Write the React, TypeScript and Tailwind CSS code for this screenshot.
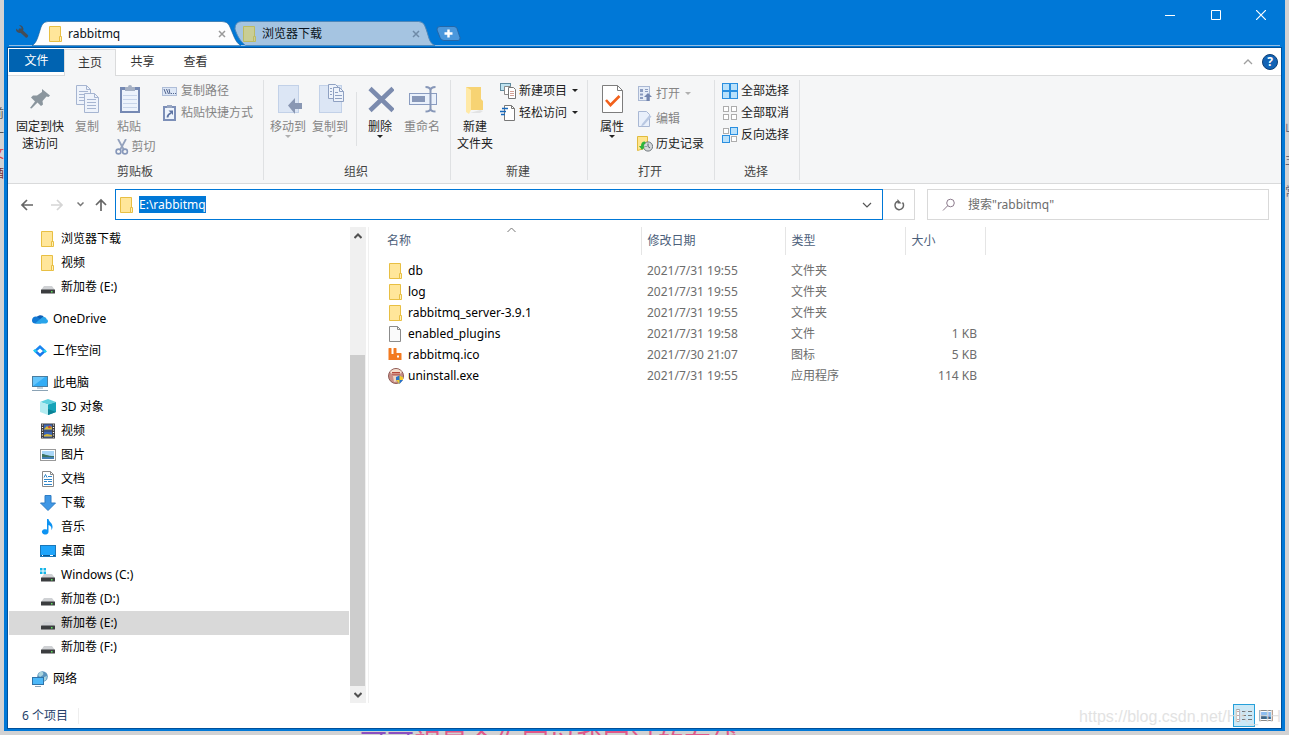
import type { ReactNode } from 'react'

const drives = ['D', 'E', 'F']

function FolderIcon({ muted = false }: { muted?: boolean }) {
  const edge = muted ? '#bdbb62' : '#e8bf43'
  return (
    <svg width="16" height="16" viewBox="0 0 16 16" className="shrink-0">
      <path d="M1.500.5h11v15h-11z" fill={muted ? '#c9cd94' : '#ffe69a'} stroke={edge} />
      <path d="M11.500 15.500v-5h2v5z" fill={muted ? '#c9cd94' : '#fff0b8'} stroke={edge} />
    </svg>
  )
}

function DriveIcon({ system = false }: { system?: boolean }) {
  return (
    <svg width="16" height="16" viewBox="0 0 16 16" className="shrink-0">
      {system && (
        <path d="M0 1h2.500v2.500H0zM3.500 1h2.500v2.500H3.500zM0 4.500h2.500V7H0zM3.500 4.500h2.500V7H3.500z" fill="#14b5e8" />
      )}
      <path d="M4 7h8l3 4H1z" fill="#cfd1d4" />
      <rect x="1" y="10.500" width="14" height="4" rx="0.500" fill="#3b3d3f" />
      <rect x="11" y="12" width="1.500" height="1.500" fill="#5fe05f" />
    </svg>
  )
}

function OneDriveIcon() {
  return (
    <svg width="16" height="16" viewBox="0 0 16 16" className="shrink-0">
      <path d="M4 7.500a4.500 4.500 0 0 1 8.300-1L9 10z" fill="#0f5fb5" />
      <path d="M0 9.500C0 7 2 5.300 4.500 5.600L11 10l-2 2.500H3C1.300 12.500 0 11.300 0 9.500z" fill="#1279d4" />
      <path d="M3 12.500l7-6c3-1.200 4.300.3 4.500 1.700 1 .4 1.500 1.200 1.500 2.100 0 1.200-1 2.200-2.200 2.200z" fill="#28a4ea" />
    </svg>
  )
}

function WorkspaceIcon() {
  return (
    <svg width="16" height="16" viewBox="0 0 16 16" className="shrink-0">
      <path d="M2.500 7L8 2l6 5.500-2 1.500-4-3.500-3 2.500z" fill="#1a86f0" />
      <path d="M13.500 9L8 14 2 8.500 4 7l4 3.500L11 8z" fill="#1677ec" />
      <path d="M1 7.500L3 6l2 2-1.500 2zM15 8.500L13 10l-2-2 1.500-2z" fill="#20cdf0" />
    </svg>
  )
}

function ComputerIcon() {
  return (
    <svg width="16" height="16" viewBox="0 0 16 16" className="shrink-0">
      <rect x="0.500" y="1.500" width="15" height="10" fill="#33adf5" stroke="#4a7d9f" />
      <path d="M1 11V2h12z" fill="#65c5fb" />
      <path d="M5 13h6M0 15.500h16" stroke="#8ba3b5" />
    </svg>
  )
}

function CubeIcon() {
  return (
    <svg width="16" height="16" viewBox="0 0 16 16" className="shrink-0">
      <path d="M0 3l8-3 8 3-8 2.500z" fill="#5dd1de" />
      <path d="M0 3l8 2.500V16l-8-3z" fill="#b3ecf1" />
      <path d="M16 3L8 5.500V16l8-3z" fill="#16a3b8" />
      <path d="M8 10l8 3-8 3z" fill="#0b8295" />
    </svg>
  )
}

function VideoIcon() {
  return (
    <svg width="16" height="16" viewBox="0 0 16 16" className="shrink-0">
      <rect x="1" y="0.500" width="14" height="15" fill="#3f3f42" />
      <rect x="4" y="1.500" width="8" height="6" fill="#3c67b8" />
      <rect x="4" y="8.500" width="8" height="6" fill="#3c67b8" />
      <path d="M5 5l2-2 2 2 2-2 1 2v1.500H4zM4 12l3-1 5 1v1.500H4z" fill="#d9b834" />
      <circle cx="9.500" cy="4" r="1.300" fill="#cf4a2c" />
      <path d="M2.500 1.500v13M13.500 1.500v13" stroke="#fff" strokeWidth="1.200" strokeDasharray="1 1.500" />
    </svg>
  )
}

function PictureIcon() {
  return (
    <svg width="16" height="16" viewBox="0 0 16 16" className="shrink-0">
      <rect x="0.500" y="2.500" width="15" height="11" fill="#fff" stroke="#999" />
      <rect x="2" y="4" width="12" height="8" fill="#a9d6f7" />
      <path d="M2 7c3 0 5 2 12 2v1H2z" fill="#3c7360" />
      <path d="M2 10h12v2H2z" fill="#4480b4" />
    </svg>
  )
}

function DocumentIcon() {
  return (
    <svg width="16" height="16" viewBox="0 0 16 16" className="shrink-0">
      <path d="M2.500.5h8l3 3v12h-11z" fill="#fff" stroke="#8a8a8a" />
      <path d="M10.500.5v3h3" fill="none" stroke="#8a8a8a" />
      <path d="M4 6.500l1.500-3L7 6.500M8 5.500h4M4 8.500h8M4 10.500h3M8 10.500h4M4 13.500h8" fill="none" stroke="#3186c8" />
    </svg>
  )
}

function DownloadIcon() {
  return (
    <svg width="16" height="16" viewBox="0 0 16 16" className="shrink-0">
      <path d="M5 .5h6V8h4.500L8 15.500.5 8H5z" fill="#3f97e5" stroke="#2f7dc4" />
    </svg>
  )
}

function MusicIcon() {
  return (
    <svg width="16" height="16" viewBox="0 0 16 16" className="shrink-0">
      <path d="M7 0h1.500c.3 3 4.500 4 4 8.500-.1 1-.6 2-1.300 2.700.8-3-.7-4.500-2.700-5.200V13a3.300 2.700 0 1 1-1.500-2.400z" fill="#0d93f2" />
    </svg>
  )
}

function DesktopIcon() {
  return (
    <svg width="16" height="16" viewBox="0 0 16 16" className="shrink-0">
      <rect x="0.500" y="2.500" width="15" height="11" fill="#1fa5fb" stroke="#1a77b8" />
      <path d="M1 12.500h14" stroke="#0b5893" />
      <path d="M2 12.500h1M10 12.500h3" stroke="#fff" />
    </svg>
  )
}

function NetworkIcon() {
  return (
    <svg width="16" height="16" viewBox="0 0 16 16" className="shrink-0">
      <circle cx="10.500" cy="5.500" r="5.300" fill="#5a94bd" />
      <path d="M8 1c3-1 4 1 3 3L8 6 6 4zM12 6l3-1-1 4-2 1z" fill="#a9d3dd" />
      <rect x="0.500" y="6.500" width="11" height="7" fill="#4db8f8" stroke="#2f73a8" />
      <path d="M3 15.500h6" stroke="#8ba3b5" />
    </svg>
  )
}

function FileIcon() {
  return (
    <svg width="16" height="16" viewBox="0 0 16 16" className="shrink-0">
      <path d="M1.500.5h8l3 3v12h-11z" fill="#fafafa" stroke="#8b8b8b" />
      <path d="M9.500.5v3h3" fill="none" stroke="#8b8b8b" />
    </svg>
  )
}

function RabbitIcon() {
  return (
    <svg width="16" height="16" viewBox="0 0 16 16" className="shrink-0">
      <path d="M.5 1.500A.5.500 0 0 1 1 1h2a.5.500 0 0 1 .5.500V7h2V1.500A.5.500 0 0 1 6 1h2a.5.500 0 0 1 .5.500V6H13a.5.500 0 0 1 .5.500V13H.5zM9 8.500v2h2v-2z" fill="#f37a20" fillRule="evenodd" />
    </svg>
  )
}

function InstallerIcon() {
  return (
    <svg width="16" height="16" viewBox="0 0 16 16" className="shrink-0">
      <circle cx="8" cy="8" r="7.500" fill="#c98f87" stroke="#8d5a54" />
      <path d="M2 4c3-4 9-4 12 0l-2 2H4z" fill="#f3dfcf" />
      <path d="M4 6h8M4 4.500h8" stroke="#b4473a" />
      <path d="M5 8h5v5l-4 1z" fill="#efd6c4" />
      <path d="M8 9l3.500-1.500L15 9v3l-3.500 4L8 12z" fill="#2773c9" />
      <path d="M11.500 7.500L15 9v3h-3.500zM8 12h3.500v4z" fill="#f8cc2d" />
    </svg>
  )
}

function PinIcon() {
  return (
    <svg width="24" height="32" viewBox="0 0 24 32">
      <path d="M14 5l8 6.500-1.500 1.500-2-.5-4 4.500.5 3.500-2 1.500-3.500-3.500-6 6L2 24l5-6.500-4-4L5 11.500h4L14 8z" fill="#8b969e" />
    </svg>
  )
}

function PageLines({ x, y }: { x: number; y: number }) {
  return (
    <g transform={`translate(${x} ${y})`}>
      <path d="M.5.5h10l4 4v15H.5z" fill="#eef3fb" stroke="#a6b5d1" />
      <path d="M10.500.5v4h4M3 6.500h9M3 9.500h9M3 12.500h9M3 15.500h9" fill="none" stroke="#a6b5d1" />
    </g>
  )
}

function CopyIcon() {
  return (
    <svg width="26" height="32" viewBox="0 0 26 32">
      <PageLines x={2} y={1} />
      <PageLines x={10} y={9} />
    </svg>
  )
}

function PasteIcon() {
  return (
    <svg width="24" height="32" viewBox="0 0 24 32">
      <rect x="3" y="3" width="20" height="26" fill="#7589b3" />
      <rect x="5" y="6" width="16" height="21" fill="#edf3fc" />
      <path d="M6 11.500h14M6 15.500h14M6 19.500h14M6 23.500h14" stroke="#c8d5ea" />
      <path d="M8 7V3h3a2 2 0 0 1 4 0h3v4z" fill="#a6b1c4" />
    </svg>
  )
}

function MoveIcon() {
  return (
    <svg width="28" height="32" viewBox="0 0 28 32">
      <rect x="4.500" y="1.500" width="20" height="27" fill="#dce6f5" stroke="#c2d1e8" />
      <path d="M14 21.500l7-7.500v5h8v6h-8v5z" fill="#8997b3" />
    </svg>
  )
}

function CopyToIcon() {
  return (
    <svg width="28" height="32" viewBox="0 0 28 32">
      <rect x="3.500" y="1.500" width="22" height="27" fill="#dce6f5" stroke="#c2d1e8" />
      <path d="M12.500.5h7l3 3v11h-10z" fill="#eef3fb" stroke="#8fa1c2" />
      <path d="M17.500 3.500h6l4 4v10h-10z" fill="#eef3fb" stroke="#8fa1c2" />
      <path d="M23.500 3.500v4h4M19 8.500h3M19 11.500h7M19 14.500h7M14 4.500h2M14 7.500h2M14 10.500h2" fill="none" stroke="#8fa1c2" />
    </svg>
  )
}

function DeleteIcon() {
  return (
    <svg width="28" height="32" viewBox="0 0 28 32">
      <path d="M4 4.500l23 22M27 4.500l-23 22" stroke="#7b8bae" strokeWidth="4.500" />
    </svg>
  )
}

function RenameIcon() {
  return (
    <svg width="30" height="32" viewBox="0 0 30 32">
      <rect x="2.500" y="9.500" width="27" height="11" fill="#eaf1fb" stroke="#8a9cc0" />
      <rect x="5" y="12" width="13" height="6" fill="#8797b8" />
      <path d="M18.500 3c3 0 5 1 5 3.500v18c0 2-2 3-5 3M28.500 3c-3 0-5 1-5 3.500v18c0 2 2 3 5 3" fill="none" stroke="#8797b8" strokeWidth="2" />
    </svg>
  )
}

function NewFolderIcon() {
  return (
    <svg width="24" height="32" viewBox="0 0 24 32">
      <path d="M3 3h15v12l2 2v9H6z" fill="#f7d373" />
      <path d="M3 3l5 3v20l-2 4-3-2z" fill="#ffe9a6" />
      <path d="M7 29l10-3 3 1-3 2z" fill="#e2e3e4" />
    </svg>
  )
}

function PropertiesIcon() {
  return (
    <svg width="24" height="32" viewBox="0 0 24 32">
      <path d="M2.500 1.500h15l5 5v22h-20z" fill="#fff" stroke="#7d7d7d" />
      <path d="M17.500 1.500v5h5" fill="none" stroke="#7d7d7d" />
      <path d="M6 16l4.500 5 9-9" fill="none" stroke="#f2611c" strokeWidth="2.600" />
    </svg>
  )
}

function CutIcon() {
  return (
    <svg width="14" height="16" viewBox="0 0 14 16">
      <path d="M3 0l6 11M11 0L5 11" stroke="#94a2bd" strokeWidth="1.800" />
      <circle cx="3.500" cy="12.500" r="2.400" fill="none" stroke="#8798ba" strokeWidth="1.600" />
      <circle cx="10" cy="12.500" r="2.400" fill="none" stroke="#8798ba" strokeWidth="1.600" />
    </svg>
  )
}

function CopyPathIcon() {
  return (
    <svg width="16" height="16" viewBox="0 0 16 16">
      <rect x="0.500" y="4.500" width="14" height="8" fill="#dde7f6" stroke="#aebdd8" />
      <path d="M2 6l2 5M4.500 6l2 5M7 6l1 5M9 10.500h1M11 10.500h1M13 10.500h1" stroke="#52658f" />
    </svg>
  )
}

function PasteShortcutIcon() {
  return (
    <svg width="16" height="16" viewBox="0 0 16 16">
      <rect x="2" y="2" width="11" height="13" fill="#eef4fc" stroke="#7c8fb8" strokeWidth="2" />
      <path d="M5 0h5v3H5z" fill="#97a5c1" />
      <path d="M5.500 12.500c0-2.500 1-3.500 3.500-4.500" fill="none" stroke="#5e74a3" strokeWidth="1.800" />
      <path d="M6.500 5.500H11V10z" fill="#5e74a3" />
    </svg>
  )
}

function NewItemIcon() {
  return (
    <svg width="16" height="16" viewBox="0 0 16 16">
      <rect x="0.500" y="0.500" width="10" height="7" fill="#bfe3f0" stroke="#5e8ba0" />
      <path d="M4.500 3.500h6v8h-6z" fill="#fff" stroke="#8a8a8a" />
      <path d="M8.500 4.500h5l2 2v9h-7z" fill="#fff" stroke="#777" />
      <path d="M10 8.500h4M10 10.500h4M10 12.500h4" stroke="#d4a196" />
    </svg>
  )
}

function EasyAccessIcon() {
  return (
    <svg width="16" height="16" viewBox="0 0 16 16">
      <path d="M4.500.5h7l3 3v12h-10z" fill="#fff" stroke="#777" />
      <path d="M11.500.5v3h3" fill="none" stroke="#777" />
      <path d="M2 3.500h6M0 6.500h6M1 9.500h4" stroke="#1769bd" strokeWidth="1.600" />
    </svg>
  )
}

function OpenIcon() {
  return (
    <svg width="16" height="16" viewBox="0 0 16 16">
      <rect x="1.500" y="0.500" width="11" height="14" fill="#e6edf8" stroke="#aab8d3" />
      <path d="M3 3h3v3H3zM3 7.500h3v2H3zM3 11h3v2H3z" fill="#8b9cc0" />
      <path d="M8 3.500h3M8 5.500h3" stroke="#8b9cc0" />
      <path d="M11 7l4 4h-2.500v4h-3v-4H7z" fill="#7385af" />
    </svg>
  )
}

function EditIcon() {
  return (
    <svg width="16" height="16" viewBox="0 0 16 16">
      <path d="M1.500.5h8l3 3v12h-11z" fill="#e9f0fb" stroke="#a9b8d4" />
      <path d="M5 13l7.500-9 2 1.500L7 14l-3 1.500z" fill="#b9c8e2" />
    </svg>
  )
}

function HistoryIcon() {
  return (
    <svg width="16" height="16" viewBox="0 0 16 16">
      <path d="M.5.5h10v11l-10 3z" fill="#ffe58e" stroke="#e0bb3e" />
      <circle cx="11" cy="10.500" r="4.600" fill="#d5d9dc" stroke="#6f777c" />
      <path d="M11 7.500v3l2 1.500M8.500 10.500h1" fill="none" stroke="#59636a" />
      <path d="M8 5.500c-3 0-4 2-4 4.500H2L5 14l3-3.500H6.500C6.500 9 7 8 8.500 7.500z" fill="#2db53a" />
    </svg>
  )
}

function SelectIcon({ picked }: { picked: boolean[] }) {
  const full = picked.every(Boolean)
  return (
    <svg width="16" height="16" viewBox="0 0 16 16">
      {picked.map((on, index) => (
        <rect
          key={index}
          x={(index % 2) * 8 + (full || on ? 0.5 : 1.5)}
          y={Math.floor(index / 2) * 8 + (full || on ? 0.5 : 1.5)}
          width={on ? 7 : 5}
          height={on ? 7 : 5}
          fill={on ? '#b9e1fb' : '#fff'}
          stroke={on ? '#2a8fe0' : '#adadad'}
        />
      ))}
    </svg>
  )
}

function Caret({ muted = false }: { muted?: boolean }) {
  return (
    <svg width="6" height="3" viewBox="0 0 6 3" className="shrink-0">
      <path d="M0 0h6L3 3z" fill={muted ? '#b0b0b0' : '#222'} />
    </svg>
  )
}

interface BigButtonProps {
  icon: ReactNode
  lines: string[]
  width: string
  muted?: boolean
  caret?: boolean
}

function BigButton({ icon, lines, width, muted = false, caret = false }: BigButtonProps) {
  return (
    <button type="button" className={`flex shrink-0 flex-col items-center pt-1 ${width} ${muted ? 'text-[#858585]' : 'text-[#222]'}`}>
      <span className="mb-0.5 flex h-8">{icon}</span>
      {lines.map((line) => (
        <span key={line} className="block leading-[17px] whitespace-nowrap">{line}</span>
      ))}
      {caret && <Caret muted={muted} />}
    </button>
  )
}

interface SmallButtonProps {
  icon: ReactNode
  label: string
  muted?: boolean
  caret?: boolean
  tall?: boolean
}

function SmallButton({ icon, label, muted = false, caret = false, tall = false }: SmallButtonProps) {
  return (
    <button type="button" className={`flex items-center gap-[3px] whitespace-nowrap ${tall ? 'h-[25px]' : 'h-[22px]'} ${muted ? 'text-[#858585]' : 'text-[#222]'}`}>
      {icon}
      <span>{label}</span>
      {caret && <span className="ml-0.5 pb-px"><Caret muted={muted} /></span>}
    </button>
  )
}

function RibbonGroup({ title, width, children }: { title: string; width: string; children: ReactNode }) {
  return (
    <section className={`flex shrink-0 flex-col justify-between border-r border-[#dfe1e3] ${width}`}>
      <div className="flex items-start">{children}</div>
      <h2 className="pr-0.5 text-center leading-[17px] text-[#444]">{title}</h2>
    </section>
  )
}

function Ribbon() {
  return (
    <div className="flex h-[108px] shrink-0 border-b border-[#d9dadb] bg-[#f5f6f7] pt-1 pb-[3px] pl-px">
      <RibbonGroup title="剪贴板" width="w-[255px]">
        <BigButton icon={<PinIcon />} lines={['固定到快', '速访问']} width="w-[62px]" />
        <BigButton icon={<CopyIcon />} lines={['复制']} width="w-8" muted />
        <div className="flex w-[52px] flex-col items-center">
          <BigButton icon={<PasteIcon />} lines={['粘贴']} width="w-10" muted />
          <div className="mt-px ml-3"><SmallButton icon={<CutIcon />} label="剪切" muted /></div>
        </div>
        <div className="ml-[7px] flex flex-col items-start">
          <SmallButton icon={<CopyPathIcon />} label="复制路径" muted />
          <SmallButton icon={<PasteShortcutIcon />} label="粘贴快捷方式" muted />
        </div>
      </RibbonGroup>
      <RibbonGroup title="组织" width="w-[187px]">
        <BigButton icon={<MoveIcon />} lines={['移动到']} width="ml-[3px] w-[42px]" muted caret />
        <BigButton icon={<CopyToIcon />} lines={['复制到']} width="w-[42px]" muted caret />
        <div className="mx-[5px] mt-3 h-[54px] w-px bg-[#dfe1e3]" />
        <BigButton icon={<DeleteIcon />} lines={['删除']} width="w-9" caret />
        <BigButton icon={<RenameIcon />} lines={['重命名']} width="ml-[3px] w-[42px]" muted />
      </RibbonGroup>
      <RibbonGroup title="新建" width="w-[137px]">
        <BigButton icon={<NewFolderIcon />} lines={['新建', '文件夹']} width="w-12" />
        <div className="ml-px flex flex-col items-start">
          <SmallButton icon={<NewItemIcon />} label="新建项目" caret />
          <SmallButton icon={<EasyAccessIcon />} label="轻松访问" caret />
        </div>
      </RibbonGroup>
      <RibbonGroup title="打开" width="w-[127px]">
        <BigButton icon={<PropertiesIcon />} lines={['属性']} width="w-12" caret />
        <div className="ml-px flex flex-col items-start pt-px">
          <SmallButton icon={<OpenIcon />} label="打开" muted caret tall />
          <SmallButton icon={<EditIcon />} label="编辑" muted tall />
          <SmallButton icon={<HistoryIcon />} label="历史记录" tall />
        </div>
      </RibbonGroup>
      <RibbonGroup title="选择" width="w-[85px]">
        <div className="ml-[7px] flex flex-col items-start">
          <SmallButton icon={<SelectIcon picked={[true, true, true, true]} />} label="全部选择" />
          <SmallButton icon={<SelectIcon picked={[false, false, false, false]} />} label="全部取消" />
          <SmallButton icon={<SelectIcon picked={[false, true, true, false]} />} label="反向选择" />
        </div>
      </RibbonGroup>
    </div>
  )
}

function WindowTab({ title, active = false }: { title: string; active?: boolean }) {
  return (
    <div className={`relative flex h-[25px] items-center ${active ? 'z-10 w-[210px] pl-4' : '-ml-2 w-[202px] pl-2'}`}>
      <svg viewBox="0 0 210 25" preserveAspectRatio="none" className="absolute inset-0 size-full">
        {active ? (
          <path d="M0 24.500C6 22 7 10 10 4Q12 .5 16 .5H190Q195 .5 197 4C201 12 203 22 209 24.500z" fill="#fdfdfe" stroke="#1b5d96" strokeOpacity="0.600" />
        ) : (
          <path d="M1 8Q1 .5 8 .5H192Q196 .5 198 4C203 15 202 22 209 24.500H12C6 20 3 14 1 8z" fill="#a5c4e1" stroke="#4f87b8" />
        )}
      </svg>
      <span className="relative flex flex-1 items-center gap-1 text-[#0b1320]">
        <FolderIcon muted={!active} />
        <span>{title}</span>
      </span>
      <button type="button" aria-label={`关闭 ${title}`} className="relative mr-4">
        <svg width="8" height="8" viewBox="0 0 8 8">
          <path d="M1 1l6 6M7 1L1 7" stroke={active ? '#9a9a9a' : '#6f8ba8'} strokeWidth="1.500" />
        </svg>
      </button>
    </div>
  )
}

function TitleBar() {
  return (
    <header className="flex h-[47px] shrink-0 items-start justify-between">
      <div className="relative flex min-w-0 flex-1 items-end self-stretch pb-px pl-2.5">
        <div className="absolute right-0 bottom-px left-[5px] h-px bg-[#93bce2]" />
        <button type="button" aria-label="设置" className="mb-1.5">
          <svg width="16" height="16" viewBox="0 0 16 16">
            <path d="M6 6l6.500 6" stroke="#444d57" strokeWidth="3.200" strokeLinecap="round" />
            <path d="M5 1l2.500 2.500L7 6l-2.500.5L2 4.500A3.800 3.800 0 0 0 7.500 8.500L9 7A4.200 4.200 0 0 0 5 1z" fill="#444d57" />
          </svg>
        </button>
        <div className="ml-0.5 flex items-end">
          <WindowTab title="rabbitmq" active />
          <WindowTab title="浏览器下载" />
        </div>
        <button type="button" aria-label="新标签页" className="relative mb-1">
          <svg width="25" height="16" viewBox="0 0 25 16">
            <path d="M4 .5h14q2 0 3 2l3 9q.5 3-2 3H8q-3 0-4-3L1 4Q.5.5 4 .5z" fill="#4a97dc" stroke="#2467a8" />
            <path d="M12.500 3.500v8M8.500 7.500h8" stroke="#fff" strokeWidth="2.400" />
          </svg>
        </button>
      </div>
      <div className="relative flex self-stretch pr-0.5">
        <div className="absolute right-[5px] bottom-px left-0 h-px bg-[#93bce2]" />
        <button type="button" aria-label="最小化" className="flex h-[30px] w-[46px] items-center justify-center">
          <svg width="10" height="10" viewBox="0 0 10 10"><path d="M0 5.500h10" stroke="#fff" /></svg>
        </button>
        <button type="button" aria-label="最大化" className="flex h-[30px] w-[46px] items-center justify-center">
          <svg width="10" height="10" viewBox="0 0 10 10"><path d="M.5.5h9v9h-9z" fill="none" stroke="#fff" /></svg>
        </button>
        <button type="button" aria-label="关闭" className="flex h-[30px] w-11 items-center justify-center">
          <svg width="10" height="10" viewBox="0 0 10 10"><path d="M0 0l10 10M10 0L0 10" stroke="#fff" strokeWidth="1.200" /></svg>
        </button>
      </div>
    </header>
  )
}

function MenuBar() {
  return (
    <nav className="flex h-7 shrink-0 border-b border-[#dadbdc] pl-px text-[#333]">
      <button type="button" className="mt-px h-[23px] w-[55px] bg-[#0063b1] text-white">文件</button>
      <button type="button" className="mt-px -mb-px w-[52px] border-x border-t border-[#dadbdc] bg-[#f5f6f7]">主页</button>
      <button type="button" className="w-[53px]">共享</button>
      <button type="button" className="w-[53px]">查看</button>
      <div className="ml-auto flex items-center gap-[9px] pr-[3px]">
        <button type="button" aria-label="最小化功能区">
          <svg width="10" height="6" viewBox="0 0 10 6"><path d="M1 5l4-4 4 4" fill="none" stroke="#a0a0a0" strokeWidth="1.300" /></svg>
        </button>
        <button type="button" aria-label="帮助" className="size-4 rounded-full border border-[#0d4076] bg-[#1263b5] text-xs leading-[14px] font-bold text-white">?</button>
      </div>
    </nav>
  )
}

function AddressBar() {
  return (
    <div className="flex shrink-0 items-center pt-[5px] pr-3 pb-[7px] pl-2">
      <button type="button" aria-label="后退" className="flex w-[22px] justify-center">
        <svg width="14" height="12" viewBox="0 0 14 12"><path d="M13 6H2M7 1L2 6l5 5" fill="none" stroke="#666" strokeWidth="1.700" /></svg>
      </button>
      <button type="button" aria-label="前进" className="ml-2 flex w-[22px] justify-center">
        <svg width="14" height="12" viewBox="0 0 14 12"><path d="M1 6h11M7 1l5 5-5 5" fill="none" stroke="#d5d5d5" strokeWidth="1.700" /></svg>
      </button>
      <button type="button" aria-label="最近位置" className="ml-1 flex w-4 justify-center">
        <svg width="7" height="5" viewBox="0 0 7 5"><path d="M.5.5l3 3 3-3" fill="none" stroke="#777" strokeWidth="1.500" /></svg>
      </button>
      <button type="button" aria-label="向上" className="ml-0.5 flex w-[22px] justify-center">
        <svg width="12" height="14" viewBox="0 0 12 14"><path d="M6 13V2M1 7l5-5 5 5" fill="none" stroke="#666" strokeWidth="1.700" /></svg>
      </button>
      <div className="ml-[3px] flex h-[31px] min-w-0 flex-1 items-center border border-[#0078d7] bg-white pl-[3px]">
        <FolderIcon />
        <input aria-label="地址" defaultValue="E:\rabbitmq" className="ml-1 field-sizing-content h-[17px] bg-[#0078d7] text-white outline-none" />
        <button type="button" aria-label="上一个位置" className="mr-2.5 ml-auto">
          <svg width="10" height="6" viewBox="0 0 10 6"><path d="M1 1l4 4 4-4" fill="none" stroke="#555" strokeWidth="1.200" /></svg>
        </button>
      </div>
      <button type="button" aria-label="刷新" className="flex h-[31px] w-8 items-center justify-center border-y border-r border-[#d9d9d9]">
        <svg width="12" height="12" viewBox="0 0 12 12">
          <path d="M9.500 3.500A4.300 4.300 0 1 1 5 2.200" fill="none" stroke="#666" strokeWidth="1.500" />
          <path d="M4.500 0v4.500h4z" fill="#666" />
        </svg>
      </button>
      <label className="ml-3 flex h-[31px] w-[342px] items-center border border-[#d9d9d9] pl-3.5">
        <svg width="14" height="14" viewBox="0 0 14 14">
          <circle cx="8.500" cy="5" r="3.800" fill="none" stroke="#8c7b8c" />
          <path d="M5.700 7.700L1 12.500" stroke="#8c7b8c" />
        </svg>
        <input aria-label="搜索" placeholder='搜索"rabbitmq"' className="ml-3 min-w-0 flex-1 outline-none placeholder:text-[#6d6d6d]" />
      </label>
    </div>
  )
}

interface TreeRowProps {
  icon: ReactNode
  label: string
  root?: boolean
  selected?: boolean
}

function TreeRow({ icon, label, root = false, selected = false }: TreeRowProps) {
  return (
    <li className={root ? 'mt-2' : ''}>
      <button type="button" className={`flex h-6 w-full items-center gap-[5px] text-left text-black ${root ? 'pl-[23px]' : 'pl-[31px]'} ${selected ? 'bg-[#d9d9d9]' : ''}`}>
        {icon}
        <span>{label}</span>
      </button>
    </li>
  )
}

function Sidebar() {
  return (
    <aside className="flex w-[358px] shrink-0 pl-px">
      <ul className="min-w-0 flex-1">
        <TreeRow icon={<FolderIcon />} label="浏览器下载" />
        <TreeRow icon={<FolderIcon />} label="视频" />
        <TreeRow icon={<DriveIcon />} label="新加卷 (E:)" />
        <TreeRow icon={<OneDriveIcon />} label="OneDrive" root />
        <TreeRow icon={<WorkspaceIcon />} label="工作空间" root />
        <TreeRow icon={<ComputerIcon />} label="此电脑" root />
        <TreeRow icon={<CubeIcon />} label="3D 对象" />
        <TreeRow icon={<VideoIcon />} label="视频" />
        <TreeRow icon={<PictureIcon />} label="图片" />
        <TreeRow icon={<DocumentIcon />} label="文档" />
        <TreeRow icon={<DownloadIcon />} label="下载" />
        <TreeRow icon={<MusicIcon />} label="音乐" />
        <TreeRow icon={<DesktopIcon />} label="桌面" />
        <TreeRow icon={<DriveIcon system />} label="Windows (C:)" />
        {drives.map((drive) => (
          <TreeRow key={drive} icon={<DriveIcon />} label={`新加卷 (${drive}:)`} selected={drive === 'E'} />
        ))}
        <TreeRow icon={<NetworkIcon />} label="网络" root />
      </ul>
      <div className="ml-px flex w-4 flex-col bg-[#f0f0f0]">
        <button type="button" aria-label="向上滚动" className="flex h-[17px] items-center justify-center">
          <svg width="8" height="6" viewBox="0 0 8 6"><path d="M.5 5L4 1.500 7.500 5" fill="none" stroke="#505050" strokeWidth="2" /></svg>
        </button>
        <div className="flex flex-1 flex-col justify-end">
          <div className="mr-px h-3/4 bg-[#cdcdcd]" />
        </div>
        <button type="button" aria-label="向下滚动" className="flex h-[17px] items-center justify-center">
          <svg width="8" height="6" viewBox="0 0 8 6"><path d="M.5 1L4 4.500 7.500 1" fill="none" stroke="#505050" strokeWidth="2" /></svg>
        </button>
      </div>
    </aside>
  )
}

// size 为空表示文件夹
const files = [
  { name: 'db', date: '2021/7/31 19:55', type: '文件夹', size: '', icon: <FolderIcon /> },
  { name: 'log', date: '2021/7/31 19:55', type: '文件夹', size: '', icon: <FolderIcon /> },
  { name: 'rabbitmq_server-3.9.1', date: '2021/7/31 19:55', type: '文件夹', size: '', icon: <FolderIcon /> },
  { name: 'enabled_plugins', date: '2021/7/31 19:58', type: '文件', size: '1 KB', icon: <FileIcon /> },
  { name: 'rabbitmq.ico', date: '2021/7/30 21:07', type: '图标', size: '5 KB', icon: <RabbitIcon /> },
  { name: 'uninstall.exe', date: '2021/7/31 19:55', type: '应用程序', size: '114 KB', icon: <InstallerIcon /> },
]

function FileTable() {
  return (
    <main className="min-w-0 flex-1">
      <table className="w-[616px] table-fixed border-collapse text-left text-[#6d6d6d]">
        <thead>
          <tr className="h-7 text-[#4c607a]">
            <th className="relative w-[272px] border-r border-[#e5e5e5] pl-[18px] font-normal">
              名称
              <svg width="9" height="6" viewBox="0 0 9 6" className="absolute top-0 left-1/2 ml-0.5">
                <path d="M.5 5l4-4 4 4" fill="none" stroke="#777" />
              </svg>
            </th>
            <th className="w-36 border-r border-[#e5e5e5] pl-1.5 font-normal">修改日期</th>
            <th className="w-[120px] border-r border-[#e5e5e5] pl-1.5 font-normal">类型</th>
            <th className="w-20 border-r border-[#e5e5e5] pl-1.5 font-normal">大小</th>
          </tr>
        </thead>
        <tbody className="before:block before:h-[5px] before:content-['']">
          {files.map((file) => (
            <tr key={file.name} className="h-[21px]">
              <td className="pl-[19px]">
                <span className="flex items-center gap-1 text-black">
                  {file.icon}
                  {file.name}
                </span>
              </td>
              <td className="pl-1.5">{file.date}</td>
              <td className="pl-1.5">{file.type}</td>
              <td className="pr-2 text-right">{file.size}</td>
            </tr>
          ))}
        </tbody>
      </table>
    </main>
  )
}

function StatusBar() {
  return (
    <footer className="relative flex h-[25px] shrink-0 items-center pr-2 pl-3.5 text-[#26416b]">
      <span className="mr-2.5 border-r border-[#eee] pr-2.5">6 个项目</span>
      <div className="ml-auto flex items-center gap-1">
        <button type="button" aria-label="详细信息" className="flex h-[23px] w-[22px] items-center justify-center border border-[#26a0da] bg-[#cbe8f6]">
          <svg width="16" height="13" viewBox="0 0 16 13">
            <path d="M.5.5h3v12h-3z" fill="#fff" stroke="#a5a5a5" />
            <path d="M2 2v9" stroke="#a34a4a" strokeDasharray="1 3" />
            <path d="M6 2.500h4M12 2.500h4M6 6.500h4M12 6.500h4M6 10.500h4M12 10.500h4" stroke="#777" />
          </svg>
        </button>
        <button type="button" aria-label="大图标">
          <svg width="14" height="11" viewBox="0 0 14 11">
            <rect x="0.500" y="0.500" width="13" height="10" fill="#fff" stroke="#888" />
            <rect x="2" y="2" width="10" height="7" fill="#8dbdf0" />
            <path d="M2 5l4 1 6 1v2H2z" fill="#3e6687" />
          </svg>
        </button>
      </div>
      <span className="pointer-events-none absolute right-0 bottom-0 text-[16px] leading-[22px] text-[#dcdcdc] opacity-80 [font-family:'Liberation_Sans',sans-serif]">https://blog.csdn.net/HK_HH</span>
    </footer>
  )
}

export default function App() {
  return (
    <div className="flex h-screen flex-col overflow-hidden bg-[#d2d2d3] text-xs [font-family:'Noto_Sans','Noto_Sans_CJK_SC',sans-serif]">
      <div className="flex min-h-0 flex-1">
        <div aria-hidden="true" className="flex w-1 flex-col items-end overflow-hidden pt-[104px] leading-5 text-[#555]">
          <span>前</span>
          <span>一</span>
          <span className="text-[#d33]">文</span>
          <span className="text-[#733]">酒</span>
        </div>
        <div className="flex min-w-0 flex-1 flex-col bg-[#0078d7] pb-0.5">
          <TitleBar />
          <div className="mx-[3px] flex min-h-0 flex-1 flex-col border border-[#00509a] bg-white">
            <MenuBar />
            <Ribbon />
            <AddressBar />
            <div className="flex min-h-0 flex-1">
              <Sidebar />
              <div className="ml-0.5 w-px bg-[#f0f0f0]" />
              <FileTable />
            </div>
            <StatusBar />
          </div>
        </div>
        <div aria-hidden="true" className="w-1 overflow-hidden pt-[112px] leading-[32px] text-[#667]">
          <p>山</p>
          <p>主</p>
          <p>常</p>
        </div>
      </div>
      <div aria-hidden="true" className="h-1 shrink-0 overflow-hidden pl-[360px] text-[27px] leading-6 whitespace-nowrap text-[#e0588a]">
        <span className="text-[#8a4fc0]">可可</span>视是今你同以我国过的在线
      </div>
    </div>
  )
}
